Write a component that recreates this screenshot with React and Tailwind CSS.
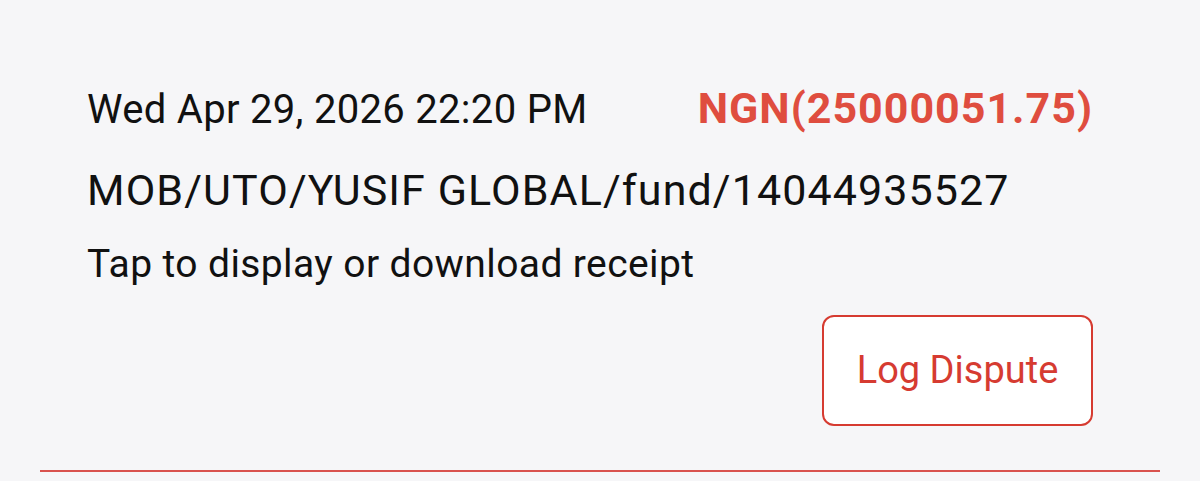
import React from 'react';

const App = () => {
  return (
    <div className="w-[1200px] h-[481px] bg-[#f6f6f8] overflow-hidden" style={{ fontFamily: 'Roboto, sans-serif' }}>
      <div className="pl-[87px] pr-[107px] pt-[83px]">
        <div className="flex items-baseline justify-between">
          <span className="text-[40px] leading-[50px] tracking-[0.3px] text-[#111]">Wed Apr 29, 2026 22:20 PM</span>
          <span className="text-[43px] leading-[50px] tracking-[1px] font-bold text-[#df4d3f]">NGN(25000051.75)</span>
        </div>
        <div className="mt-[30px] text-[43px] leading-[50px] tracking-[1.1px] text-[#111]">MOB/UTO/YUSIF GLOBAL/fund/14044935527</div>
        <div className="mt-[24px] text-[39px] leading-[50px] tracking-[0.4px] text-[#111]">Tap to display or download receipt</div>
        <div className="flex justify-end mt-[26px]">
          <button className="w-[271px] h-[111px] bg-white border-2 border-[#d63b31] rounded-[12px] text-[38px] text-[#d63b31]">
            Log Dispute
          </button>
        </div>
      </div>
      <div className="mx-[40px] mt-[44px] h-[2px] bg-[#d9534f]" />
    </div>
  );
};

export default App;
